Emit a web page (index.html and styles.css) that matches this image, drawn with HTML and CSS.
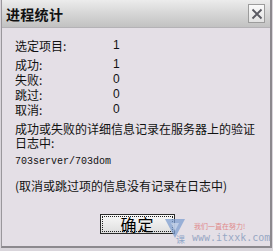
FILE: index.html
```
<!DOCTYPE html>
<html>
<head>
<meta charset="utf-8">
<link rel="stylesheet" href="styles.css">
</head>
<body>
<div class="win">
  <div class="titlebar">
    <span class="title">进程统计</span>
    <span class="close"><svg width="12" height="12" viewBox="0 0 12 12"><path d="M1.5 1.5 L10.5 10.5 M10.5 1.5 L1.5 10.5" stroke="#5a5a62" stroke-width="1.8" fill="none"/></svg></span>
  </div>
  <div class="content">
    <div class="row first"><span class="lbl">选定项目:</span><span class="val">1</span></div>
    <div class="stats">
      <div class="row"><span class="lbl">成功:</span><span class="val">1</span></div>
      <div class="row"><span class="lbl">失败:</span><span class="val">0</span></div>
      <div class="row"><span class="lbl">跳过:</span><span class="val">0</span></div>
      <div class="row"><span class="lbl">取消:</span><span class="val">0</span></div>
    </div>
    <p class="msg">成功或失败的详细信息记录在服务器上的验证<br>日志中:</p>
    <p class="path">703server/703dom</p>
    <p class="note">(取消或跳过项的信息没有记录在日志中)</p>
    <div class="btnrow">
      <button class="ok"><span class="focus">确定</span></button>
    </div>
  </div>
  <div class="wm">
    <svg class="wm-logo" width="22" height="24" viewBox="0 0 22 24"><path d="M1 3 L21 3 L11 22 Z" fill="#7f9fd0" opacity="0.75"/><path d="M7 7 L15 7 L11 15 Z" fill="#c8d4ea" opacity="0.8"/></svg>
    <span class="wm-red">我们一直在努力!</span>
    <span class="wm-ke">课</span>
    <span class="wm-url">www.itxxk.com</span>
  </div>
</div>
</body>
</html>
```
FILE: styles.css
```
html, body {
  margin: 0;
  padding: 0;
}
body {
  width: 273px;
  height: 251px;
  background: #d9d5db;
  overflow: hidden;
  font-family: "Noto Sans CJK SC", "Liberation Sans", sans-serif;
}
.win {
  position: relative;
  width: 268px;
  height: 246px;
  margin-left: 1px;
  background: #e4dfe6;
  border-left: 1px solid #9a979c;
  border-right: 2px solid #8c898e;
  border-bottom: 2px solid #8c898e;
}
.titlebar {
  height: 27px;
  background: linear-gradient(#ececec, #d6d6d6 50%, #c2c2c2);
  border-bottom: 1px solid #b4b2b6;
  display: flex;
  align-items: center;
  justify-content: space-between;
  padding: 0 5px 0 4px;
}
.title {
  font-size: 14px;
  font-weight: bold;
  color: #111;
  line-height: 14px;
  margin-top: 1px;
  letter-spacing: 0.3px;
}
.close {
  width: 17px;
  height: 19px;
  box-sizing: border-box;
  border: 1px solid #9c9c9c;
  background: linear-gradient(#fafafa, #e2e2e2);
  display: flex;
  align-items: center;
  justify-content: center;
}
.content {
  padding: 10px 0 0 13px;
  font-size: 12px;
  color: #111;
}
.row {
  display: flex;
  height: 15px;
  line-height: 15px;
}
.row.first {
  margin-bottom: 4px;
}
.lbl {
  width: 98px;
}
.val {
  font-family: "Liberation Sans", sans-serif;
  font-size: 12px;
}
.msg {
  margin: 5px 0 0;
  line-height: 14px;
}
.path {
  margin: 5px 0 0;
  font-family: "Liberation Mono", monospace;
  font-size: 10px;
  line-height: 14px;
}
.note {
  margin: 10px 0 0;
  line-height: 14px;
}
.btnrow {
  display: flex;
  padding-left: 85px;
  margin-top: 21px;
}
.ok {
  width: 75px;
  height: 20px;
  box-sizing: border-box;
  border: 1px solid #2a2a2a;
  background: linear-gradient(#f8f8f8, #dedede);
  padding: 1px;
  margin: 0;
  display: flex;
}
.focus {
  flex: 1;
  border: 1px dotted #222;
  font-family: "Noto Sans CJK SC", sans-serif;
  font-size: 16px;
  line-height: 14px;
  color: #000;
  text-align: center;
  letter-spacing: 1px;
}
.wm {
  position: absolute;
  left: 162px;
  top: 216px;
  width: 106px;
  height: 30px;
}
.wm-logo {
  position: absolute;
  left: 0;
  top: 0;
}
.wm-red {
  position: absolute;
  left: 30px;
  top: 5px;
  font-size: 7px;
  color: #e08a8a;
  white-space: nowrap;
}
.wm-ke {
  position: absolute;
  left: 12px;
  top: 17px;
  font-size: 9px;
  color: #8fa6c8;
}
.wm-url {
  position: absolute;
  left: 28px;
  top: 16px;
  font-family: "DejaVu Sans Mono", monospace;
  font-size: 10px;
  color: #98a8c4;
  white-space: nowrap;
}
```
